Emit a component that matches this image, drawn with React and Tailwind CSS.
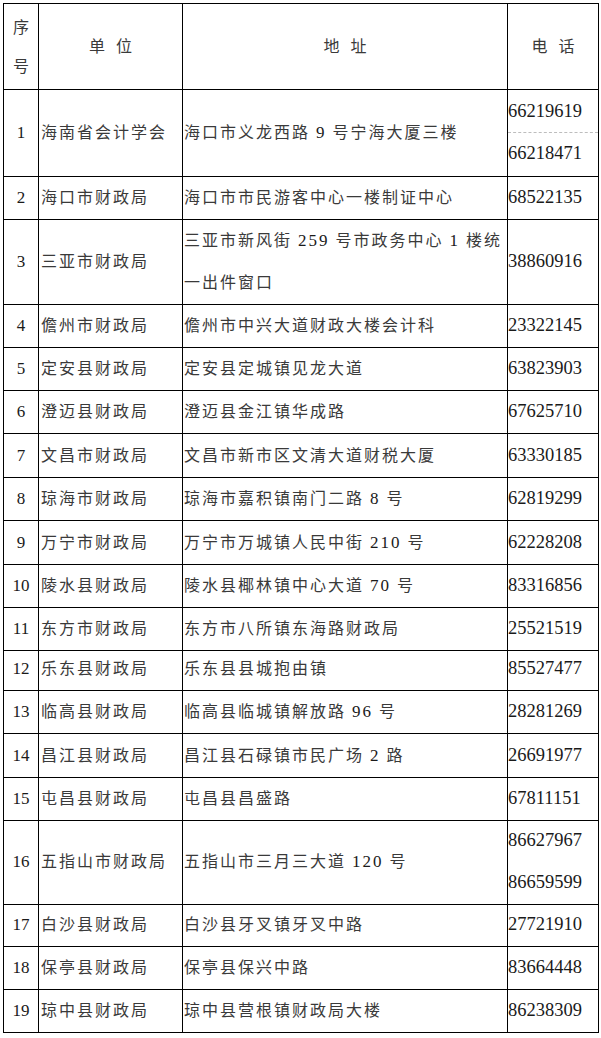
const rows = [
  { n: 1, unit: "海南省会计学会", addr: ["海口市义龙西路 9 号宁海大厦三楼"], phones: ["66219619", "66218471"], h: "h-[87px]", dashed: true },
  { n: 2, unit: "海口市财政局", addr: ["海口市市民游客中心一楼制证中心"], phones: ["68522135"], h: "h-[43px]" },
  { n: 3, unit: "三亚市财政局", addr: ["三亚市新风街 259 号市政务中心 1 楼统", "一出件窗口"], phones: ["38860916"], h: "h-[85px]" },
  { n: 4, unit: "儋州市财政局", addr: ["儋州市中兴大道财政大楼会计科"], phones: ["23322145"], h: "h-[43px]" },
  { n: 5, unit: "定安县财政局", addr: ["定安县定城镇见龙大道"], phones: ["63823903"], h: "h-[43px]" },
  { n: 6, unit: "澄迈县财政局", addr: ["澄迈县金江镇华成路"], phones: ["67625710"], h: "h-[43px]" },
  { n: 7, unit: "文昌市财政局", addr: ["文昌市新市区文清大道财税大厦"], phones: ["63330185"], h: "h-[44px]" },
  { n: 8, unit: "琼海市财政局", addr: ["琼海市嘉积镇南门二路 8 号"], phones: ["62819299"], h: "h-[43px]" },
  { n: 9, unit: "万宁市财政局", addr: ["万宁市万城镇人民中街 210 号"], phones: ["62228208"], h: "h-[44px]" },
  { n: 10, unit: "陵水县财政局", addr: ["陵水县椰林镇中心大道 70 号"], phones: ["83316856"], h: "h-[43px]" },
  { n: 11, unit: "东方市财政局", addr: ["东方市八所镇东海路财政局"], phones: ["25521519"], h: "h-[40px]" },
  { n: 12, unit: "乐东县财政局", addr: ["乐东县县城抱由镇"], phones: ["85527477"], h: "h-[43px]" },
  { n: 13, unit: "临高县财政局", addr: ["临高县临城镇解放路 96 号"], phones: ["28281269"], h: "h-[43px]" },
  { n: 14, unit: "昌江县财政局", addr: ["昌江县石碌镇市民广场 2 路"], phones: ["26691977"], h: "h-[44px]" },
  { n: 15, unit: "屯昌县财政局", addr: ["屯昌县昌盛路"], phones: ["67811151"], h: "h-[42px]" },
  { n: 16, unit: "五指山市财政局", addr: ["五指山市三月三大道 120 号"], phones: ["86627967", "86659599"], h: "h-[84px]" },
  { n: 17, unit: "白沙县财政局", addr: ["白沙县牙叉镇牙叉中路"], phones: ["27721910"], h: "h-[43px]" },
  { n: 18, unit: "保亭县财政局", addr: ["保亭县保兴中路"], phones: ["83664448"], h: "h-[43px]" },
  { n: 19, unit: "琼中县财政局", addr: ["琼中县营根镇财政局大楼"], phones: ["86238309"], h: "h-[43px]" },
];

// digits get the Times-like face a bit larger than the CJK text
function Mixed({ text }) {
  return text.split(/(\d+)/).map((part, i) =>
    /^\d+$/.test(part) ? (
      <span key={i} className="text-[17px] text-[#1a1a1a]">{part}</span>
    ) : (
      <span key={i}>{part}</span>
    )
  );
}

const grid = "grid grid-cols-[35px_144px_325px_91px]";
const cell = "border-r border-b border-black";

function Spaced({ a, b }) {
  return (
    <div className="flex gap-[11px]">
      <span>{a}</span>
      <span>{b}</span>
    </div>
  );
}

export default function App() {
  return (
    <div className="min-h-[1038px] bg-white pt-[3px] pl-[3px] font-['Liberation_Serif','Noto_Sans_CJK_SC',serif] text-[16px] text-[#3a3a3a]">
      <div className="w-[596px] border-l border-t border-black">
        {/* header */}
        <div className={`${grid} h-[86px]`}>
          <div className={`${cell} flex flex-col items-center justify-center leading-[39px]`}>
            <span>序</span>
            <span>号</span>
          </div>
          <div className={`${cell} flex items-center justify-center`}>
            <Spaced a="单" b="位" />
          </div>
          <div className={`${cell} flex items-center justify-center`}>
            <Spaced a="地" b="址" />
          </div>
          <div className={`${cell} flex items-center justify-center`}>
            <Spaced a="电" b="话" />
          </div>
        </div>

        {rows.map((r) => (
          <div key={r.n} className={`${grid} ${r.h}`}>
            <div className={`${cell} flex items-center justify-center text-[17px] text-[#1a1a1a]`}>
              {r.n}
            </div>
            <div className={`${cell} flex items-center pl-[2px] tracking-[2px] whitespace-nowrap`}>
              {r.unit}
            </div>
            <div className={`${cell} flex flex-col justify-center pl-[1px] tracking-[2px] whitespace-nowrap leading-[42px]`}>
              {r.addr.map((line, i) => (
                <div key={i}>
                  <Mixed text={line} />
                </div>
              ))}
            </div>
            <div className={`${cell} flex flex-col justify-center text-[18.5px] text-[#1a1a1a]`}>
              {r.phones.map((p, i) => (
                <div
                  key={p}
                  className={`flex items-center h-[42px] ${
                    r.dashed && i === 0 ? "border-b border-dashed border-[#bdbdbd]" : ""
                  }`}
                >
                  {p}
                </div>
              ))}
            </div>
          </div>
        ))}
      </div>
    </div>
  );
}
